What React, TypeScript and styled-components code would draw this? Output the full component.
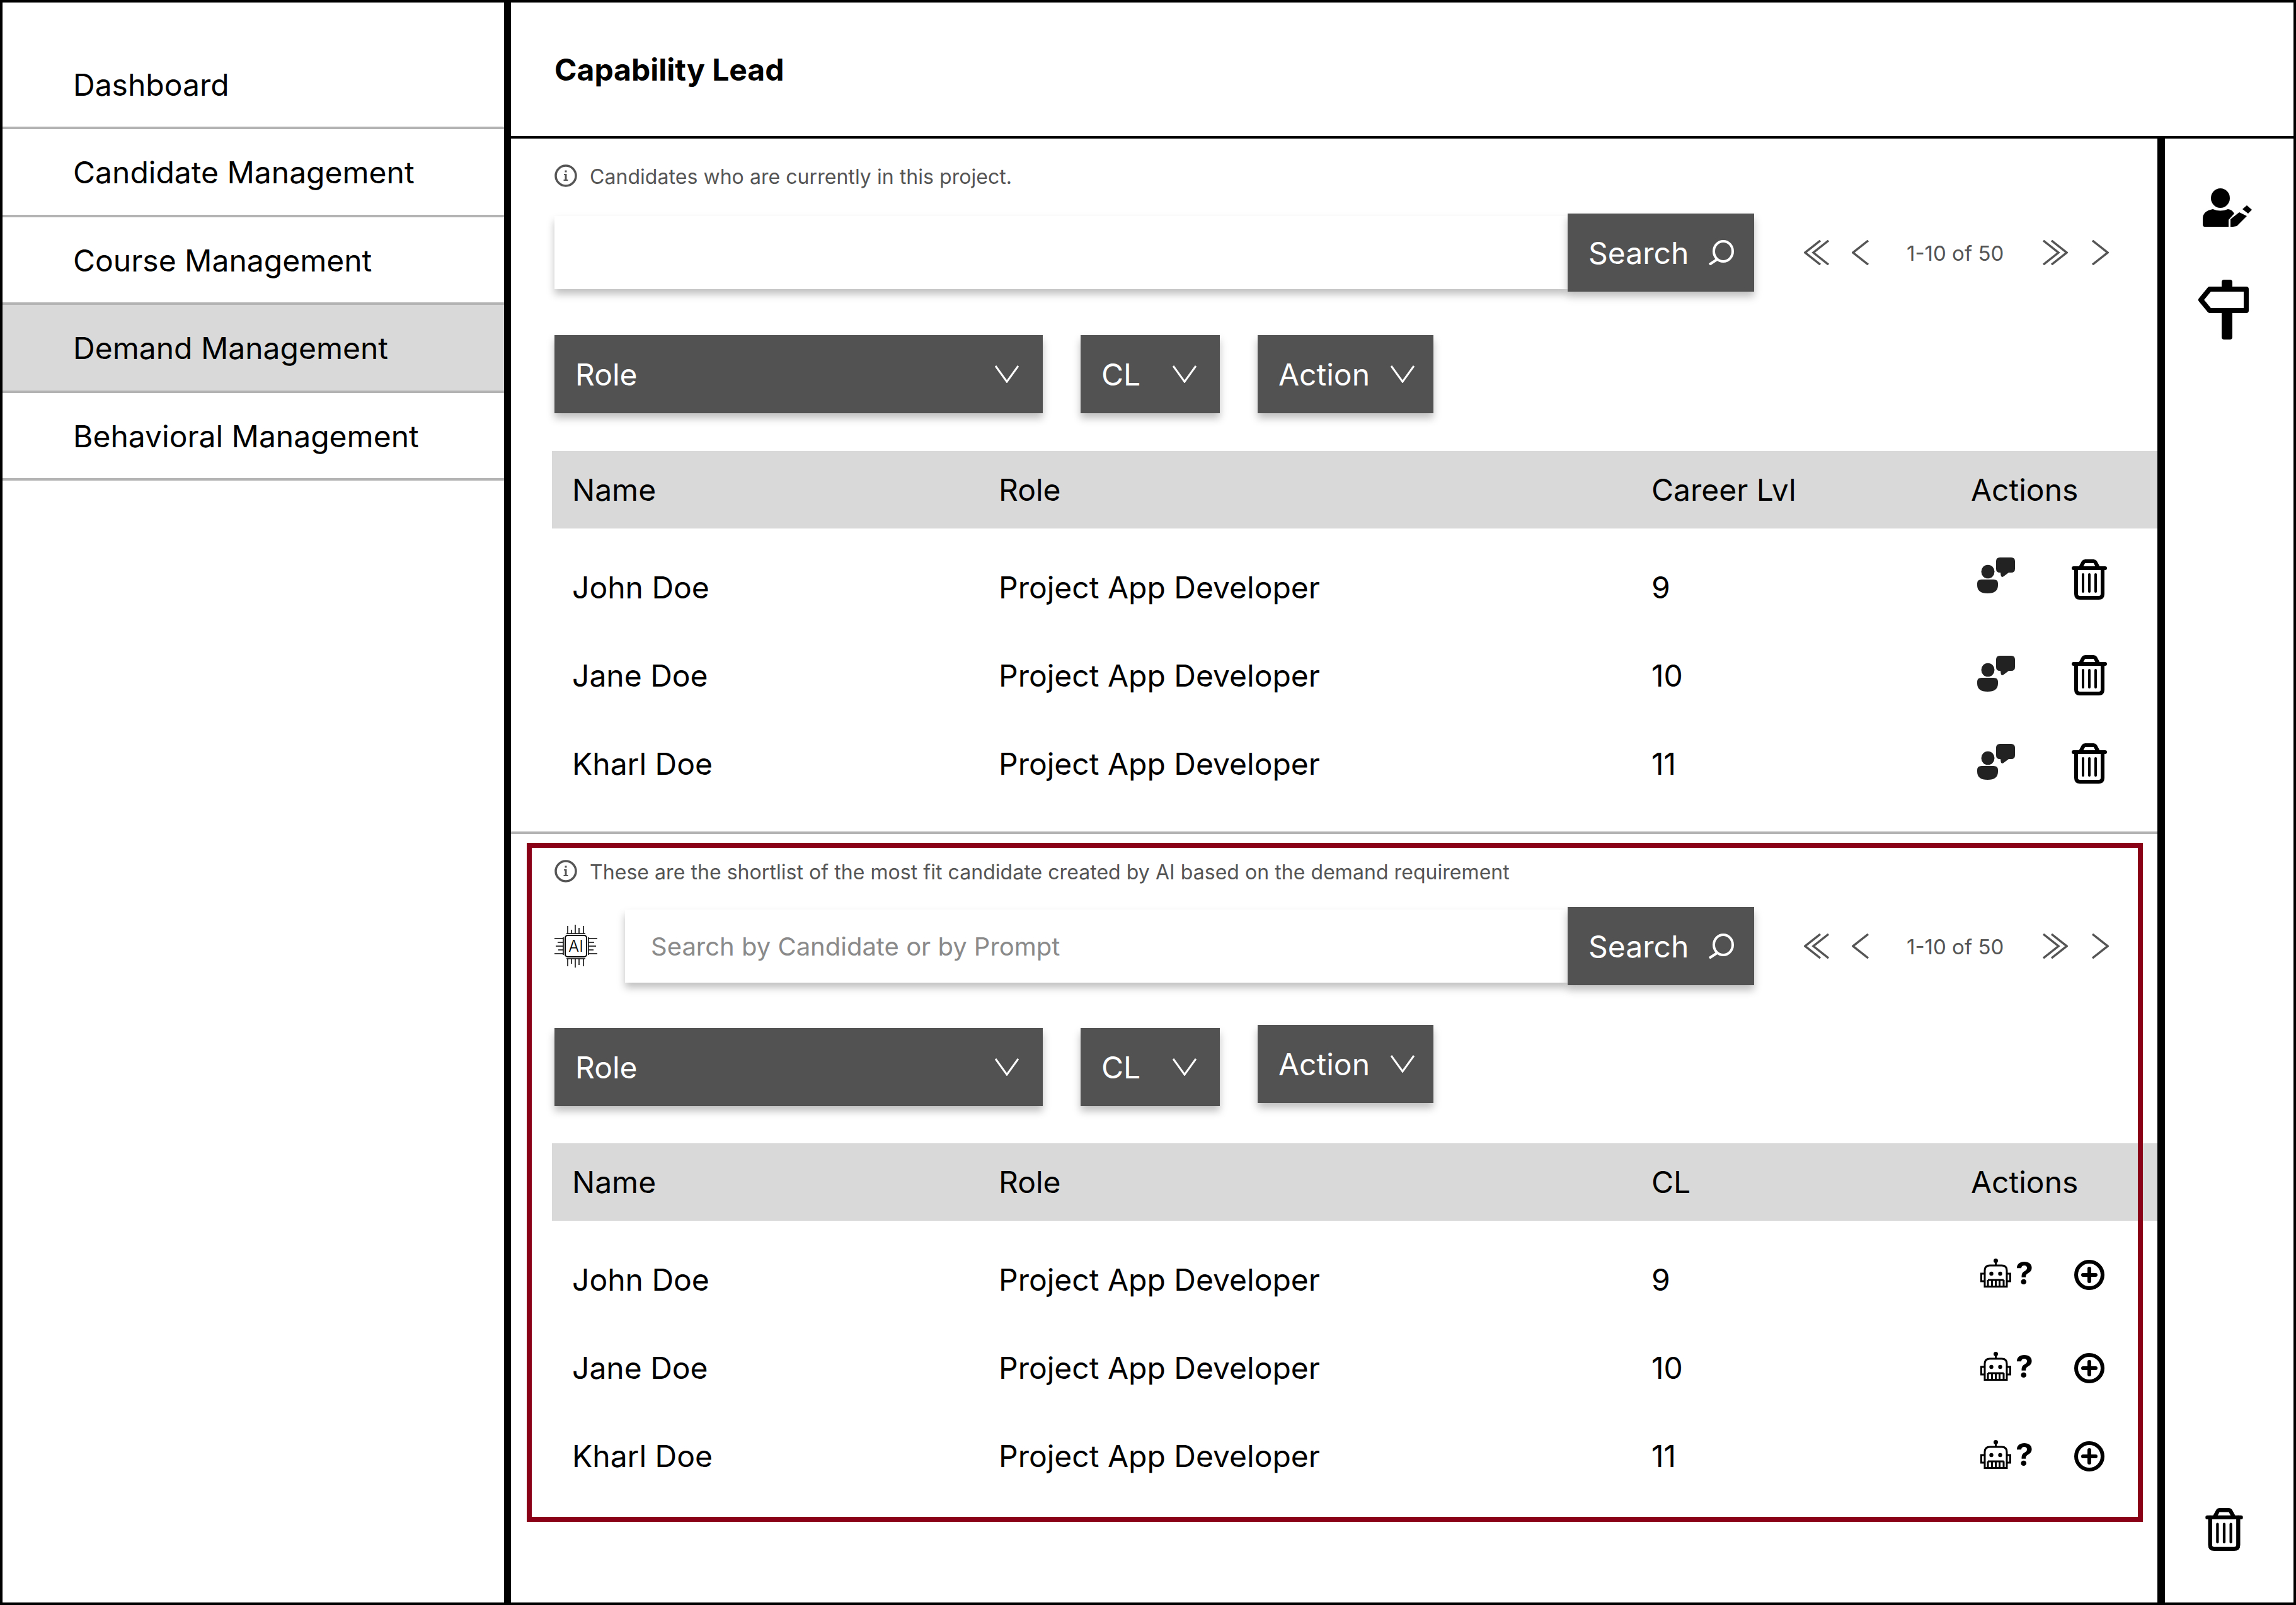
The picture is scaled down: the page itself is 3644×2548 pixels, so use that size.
import React from 'react';

import styled, { createGlobalStyle } from 'styled-components';

const GlobalStyle = createGlobalStyle`
  html, body {
    margin: 0;
    padding: 0;
    background: #fff;
  }
  * {
    box-sizing: border-box;
  }
  body {
    font-family: Inter, "Liberation Sans", sans-serif;
    color: #000;
  }
`;

const Frame = styled.div`
  width: 3644px;
  height: 2548px;
  border: 4px solid #000;
  display: flex;
  overflow: hidden;
`;

const Sidebar = styled.nav`
  width: 807px;
  flex-shrink: 0;
  border-right: 11px solid #000;
`;

const NavItem = styled.div<{ $active?: boolean; $first?: boolean }>`
  height: ${({ $first }) => ($first ? '201px' : '139.5px')};
  padding: ${({ $first }) => ($first ? '64px' : '2px')} 0 0 112px;
  display: flex;
  align-items: center;
  font-size: 48px;
  background: ${({ $active }) => ($active ? '#d9d9d9' : '#fff')};
  border-bottom: 4px solid #b3b3b3;
`;

const Main = styled.div`
  flex: 1;
  min-width: 0;
  display: flex;
  flex-direction: column;
`;

const Header = styled.header`
  height: 216px;
  flex-shrink: 0;
  border-bottom: 4px solid #000;
  padding: 0 0 0 69px;
  display: flex;
  align-items: center;
  font-size: 48px;
  font-weight: 700;
`;

const Body = styled.div`
  flex: 1;
  min-height: 0;
  display: flex;
`;

const Content = styled.div`
  flex: 1;
  min-width: 0;
`;

const Rail = styled.aside`
  width: 216px;
  flex-shrink: 0;
  border-left: 12px solid #000;
  padding: 79px 0 82px 51px;
  display: flex;
  flex-direction: column;
  align-items: flex-start;
`;

const RailSlot = styled.div<{ $indent?: number; $gap?: number; $push?: boolean }>`
  padding-left: ${({ $indent }) => $indent ?? 0}px;
  margin-top: ${({ $push, $gap }) => ($push ? 'auto' : `${$gap ?? 0}px`)};
`;

const Section = styled.section<{ $top: number; $bordered?: boolean }>`
  position: relative;
  padding: ${({ $top }) => $top}px 0 0 69px;
  border-bottom: ${({ $bordered }) => ($bordered ? '4px solid #b3b3b3' : 'none')};
`;

const Highlight = styled.div`
  position: absolute;
  left: 25px;
  top: 14px;
  width: 2565px;
  height: 1078px;
  border: 8px solid #8a0016;
  pointer-events: none;
`;

const Note = styled.div`
  height: 40px;
  display: flex;
  align-items: center;
  gap: 20px;
  font-size: 32px;
  color: #555;
`;

const NoteText = styled.span`
  padding-top: 2px;
  letter-spacing: 0.05px;
`;

const SearchRow = styled.div<{ $top: number }>`
  margin-top: ${({ $top }) => $top}px;
  display: flex;
  align-items: center;
`;

const ChipSlot = styled.div`
  width: 112px;
  flex-shrink: 0;
  display: flex;
  align-items: center;
`;

const SearchInput = styled.div`
  flex: 1;
  width: 0;
  height: 116px;
  padding-left: 41px;
  display: flex;
  align-items: center;
  background: #fff;
  box-shadow: 0 8px 12px rgba(0, 0, 0, 0.25);
  font-size: 40px;
  color: #8a8a8a;
`;

const SearchField = styled.div`
  width: 1608px;
  display: flex;
  align-items: center;
`;

const SearchButton = styled.div`
  width: 296px;
  height: 124px;
  flex-shrink: 0;
  position: relative;
  display: flex;
  align-items: center;
  justify-content: space-between;
  padding: 0 32px 0 33px;
  background: #525252;
  color: #fff;
  font-size: 48px;
  box-shadow: 0 8px 12px rgba(0, 0, 0, 0.25);
`;

const Pager = styled.div`
  margin-left: 79px;
  display: flex;
  align-items: center;
`;

const PagerSpacer = styled.span<{ $width: number }>`
  width: ${({ $width }) => $width}px;
`;

const PagerText = styled.span`
  font-size: 33px;
  color: #555;
  width: 153px;
  margin: 2px 62px 0 59px;
  white-space: nowrap;
`;

const FilterRow = styled.div<{ $top: number }>`
  margin-top: ${({ $top }) => $top}px;
  display: flex;
  align-items: flex-start;
  gap: 60px;
`;

const Dropdown = styled.div<{ $width: number; $right: number; $raised?: boolean }>`
  width: ${({ $width }) => $width}px;
  height: 124px;
  margin-top: ${({ $raised }) => ($raised ? '-5px' : '0')};
  padding: 0 ${({ $right }) => $right}px 0 33px;
  display: flex;
  align-items: center;
  justify-content: space-between;
  background: #525252;
  color: #fff;
  font-size: 48px;
  box-shadow: 0 8px 12px rgba(0, 0, 0, 0.25);
`;

const Table = styled.div<{ $top: number }>`
  margin-top: ${({ $top }) => $top}px;
  margin-left: -4px;
`;

const HeaderRow = styled.div`
  height: 123px;
  padding-left: 32px;
  display: grid;
  grid-template-columns: 677px 1036px 507px 1fr;
  align-items: center;
  background: #d9d9d9;
  font-size: 48px;
`;

const RowList = styled.div<{ $bottom: number }>`
  padding: 25px 0 ${({ $bottom }) => $bottom}px;
`;

const Row = styled.div`
  height: 140px;
  padding: 0 0 3px 32px;
  display: grid;
  grid-template-columns: 677px 1036px 507px 1fr;
  align-items: center;
  font-size: 48px;
`;

const RowActions = styled.div`
  display: grid;
  grid-template-columns: 160px auto;
  align-items: center;
`;

const IconCell = styled.div<{ $lift: number; $indent: number }>`
  display: flex;
  align-items: center;
  gap: 7px;
  padding-left: ${({ $indent }) => $indent}px;
  padding-bottom: ${({ $lift }) => $lift * 2}px;
`;

const Question = styled.span`
  font-size: 50px;
  font-weight: 700;
  line-height: 46px;
`;

const Svg = styled.svg`
  display: block;
  flex-shrink: 0;
`;

const ChevronDown = () => (
  <Svg width="38" height="28" viewBox="0 0 38 28" fill="none" stroke="#fff" strokeWidth="3">
    <path d="M1 1 L19 26 L37 1" />
  </Svg>
);

const SearchIcon = () => (
  <Svg width="42" height="40" viewBox="0 0 42 40" fill="none" stroke="#fff" strokeWidth="4">
    <ellipse cx="25" cy="18" rx="15" ry="16" />
    <path d="M15 31 L3 39" />
  </Svg>
);

const PagerChevron = ({ dir, double }: { dir: 'left' | 'right'; double?: boolean }) => (
  <Svg
    width={double ? 41 : 28}
    height="40"
    viewBox={double ? '0 0 41 40' : '0 0 28 40'}
    fill="none"
    stroke="#555"
    strokeWidth="3.5"
    transform={dir === 'right' ? 'scale(-1 1)' : undefined}
  >
    <path d="M26 1 L2 20 L26 39" />
    {double && <path d="M39 1 L15 20 L39 39" />}
  </Svg>
);

const InfoIcon = () => (
  <Svg width="36" height="36" viewBox="0 0 36 36" fill="#555">
    <circle cx="18" cy="18" r="16" fill="none" stroke="#555" strokeWidth="3.5" />
    <path d="M15 15 H19.5 V24 H21.5 V26 H14.5 V24 H16.5 V17 H15 Z" />
    <rect x="16.5" y="9.5" width="3" height="3" />
  </Svg>
);

const TrashIcon = ({ width = 56, height = 64 }: { width?: number; height?: number }) => (
  <Svg width={width} height={height} viewBox="0 0 56 64" fill="none" stroke="#000" strokeLinecap="round">
    <path d="M3 14 H53" strokeWidth="6" />
    <path d="M14 13 L18.5 4.5 Q19.5 3 21.5 3 H34.5 Q36.5 3 37.5 4.5 L42 13" strokeWidth="6" />
    <path d="M7 14 V55 Q7 61 13 61 H43 Q49 61 49 55 V14" strokeWidth="6" />
    <path d="M18 24 V51 M28 24 V51 M38 24 V51" strokeWidth="4" />
  </Svg>
);

const ChatPersonIcon = () => (
  <Svg width="60" height="57" viewBox="0 0 60 57" fill="#222">
    <ellipse cx="17" cy="22.5" rx="10.5" ry="10.8" />
    <path d="M7 35 H26 Q33 35 33 41 V44 Q33 57 16.5 57 Q0 57 0 44 V41 Q0 35 7 35 Z" />
    <path d="M36 0 H54 Q60 0 60 6 V18 Q60 24 54 24 H50 L42 30 Q38 32.5 37.5 28 L37 24 H36 Q30 24 30 18 V6 Q30 0 36 0 Z" />
  </Svg>
);

const RobotIcon = () => (
  <Svg width="49" height="46" viewBox="0 0 49 46" fill="none" stroke="#000" strokeWidth="3">
    <circle cx="24.5" cy="3.5" r="3.5" fill="#000" stroke="none" />
    <path d="M24.5 5 V11" />
    <path d="M7 44.5 V19 Q7 11 15 11 H34 Q42 11 42 19 V44.5 Z" />
    <path d="M7 24 H1.5 V36 H7 M42 24 H47.5 V36 H42" />
    <circle cx="17.5" cy="24" r="3.2" fill="#000" stroke="none" />
    <circle cx="31.5" cy="24" r="3.2" fill="#000" stroke="none" />
    <path d="M12 34 H37 M12 34 V44 M18.5 34 V44 M24.5 34 V44 M30.5 34 V44 M37 34 V44" />
  </Svg>
);

const PlusCircleIcon = () => (
  <Svg width="48" height="48" viewBox="0 0 48 48" fill="none" stroke="#000" strokeLinecap="round">
    <circle cx="24" cy="24" r="21" strokeWidth="6" />
    <path d="M24 14 V34 M14 24 H34" strokeWidth="6" />
  </Svg>
);

const ChipIcon = () => (
  <Svg width="68" height="68" viewBox="0 0 68 68" fill="none" stroke="#000" strokeWidth="1.5">
    <rect x="17" y="17" width="34" height="34" rx="4" strokeWidth="2" />
    <path d="M21 2 V14 M27 8 V14 M33 0 V14 M39 5 V14 M46 2 V14 M19 14 H49" />
    <path d="M21 54 V66 M27 54 V62 M33 54 V68 M39 54 V64 M46 54 V66 M19 54 H49" />
    <path d="M0 22 H14 M5 28 H14 M2 34 H14 M6 40 H14 M0 46 H14 M14 20 V48" />
    <path d="M54 22 H68 M54 28 H63 M54 34 H66 M54 40 H62 M54 46 H68 M54 20 V48" />
    <text
      x="34"
      y="43"
      textAnchor="middle"
      fontFamily="Inter, sans-serif"
      fontSize="25"
      fontWeight="300"
      fill="#000"
      stroke="none"
    >
      AI
    </text>
  </Svg>
);

const PersonEditIcon = () => (
  <Svg width="78" height="61" viewBox="0 0 78 61" fill="#000">
    <ellipse cx="28" cy="15.5" rx="15" ry="15.5" />
    <path d="M16 33 Q28 38 40 33 Q47 34 50 40 L41 50 V61 H3 Q0 61 0 57 V48 Q0 36 16 33 Z" />
    <path d="M44 61 V49 L58 38 L70 44 L54 60 L48 61 Z" />
    <path d="M63 33 L70 27 L78 34 L72 40 Z" />
  </Svg>
);

const SignpostIcon = () => (
  <Svg width="84" height="95" viewBox="0 0 84 95">
    <rect x="39" y="0" width="17" height="14" rx="4" fill="#000" />
    <rect x="39" y="50" width="17" height="45" rx="4" fill="#000" />
    <path d="M20 15 H78 V49 H20 L6 32 Z" fill="#fff" stroke="#000" strokeWidth="8" strokeLinejoin="round" />
  </Svg>
);

const PagerControls = () => (
  <Pager>
    <PagerChevron dir="left" double />
    <PagerSpacer $width={35} />
    <PagerChevron dir="left" />
    <PagerText>1-10 of 50</PagerText>
    <PagerChevron dir="right" double />
    <PagerSpacer $width={37} />
    <PagerChevron dir="right" />
  </Pager>
);

const Filters = ({ top, raised }: { top: number; raised?: boolean }) => (
  <FilterRow $top={top}>
    <Dropdown $width={775} $right={38}>
      Role
      <ChevronDown />
    </Dropdown>
    <Dropdown $width={221} $right={37}>
      CL
      <ChevronDown />
    </Dropdown>
    <Dropdown $width={279} $right={30} $raised={raised}>
      Action
      <ChevronDown />
    </Dropdown>
  </FilterRow>
);

const PEOPLE = [
  { name: 'John Doe', level: '9', chat: 19, trash: 13, bot: 11, plus: 8 },
  { name: 'Jane Doe', level: '10', chat: 3, trash: 1, bot: 3, plus: 0 },
  { name: 'Kharl Doe', level: '11', chat: 3, trash: 1, bot: 3, plus: 0 },
];

const App = () => (
  <Frame>
    <GlobalStyle />
    <Sidebar>
      <NavItem $first>Dashboard</NavItem>
      <NavItem>Candidate Management</NavItem>
      <NavItem>Course Management</NavItem>
      <NavItem $active>Demand Management</NavItem>
      <NavItem>Behavioral Management</NavItem>
    </Sidebar>
    <Main>
      <Header>Capability Lead</Header>
      <Body>
        <Content>
          <Section $top={39} $bordered>
            <Note>
              <InfoIcon />
              <NoteText>Candidates who are currently in this project.</NoteText>
            </Note>
            <SearchRow $top={40}>
              <SearchField>
                <SearchInput />
              </SearchField>
              <SearchButton>
                Search
                <SearchIcon />
              </SearchButton>
              <PagerControls />
            </SearchRow>
            <Filters top={69} />
            <Table $top={60}>
              <HeaderRow>
                <span>Name</span>
                <span>Role</span>
                <span>Career Lvl</span>
                <span>Actions</span>
              </HeaderRow>
              <RowList $bottom={36}>
                {PEOPLE.map((person) => (
                  <Row key={person.name}>
                    <span>{person.name}</span>
                    <span>Project App Developer</span>
                    <span>{person.level}</span>
                    <RowActions>
                      <IconCell $lift={person.chat} $indent={10}>
                        <ChatPersonIcon />
                      </IconCell>
                      <IconCell $lift={person.trash} $indent={0}>
                        <TrashIcon />
                      </IconCell>
                    </RowActions>
                  </Row>
                ))}
              </RowList>
            </Table>
          </Section>
          <Section $top={39}>
            <Highlight />
            <Note>
              <InfoIcon />
              <NoteText>
                These are the shortlist of the most fit candidate created by AI based on the demand requirement
              </NoteText>
            </Note>
            <SearchRow $top={37}>
              <SearchField>
                <ChipSlot>
                  <ChipIcon />
                </ChipSlot>
                <SearchInput>Search by Candidate or by Prompt</SearchInput>
              </SearchField>
              <SearchButton>
                Search
                <SearchIcon />
              </SearchButton>
              <PagerControls />
            </SearchRow>
            <Filters top={68} raised />
            <Table $top={59}>
              <HeaderRow>
                <span>Name</span>
                <span>Role</span>
                <span>CL</span>
                <span>Actions</span>
              </HeaderRow>
              <RowList $bottom={0}>
                {PEOPLE.map((person) => (
                  <Row key={person.name}>
                    <span>{person.name}</span>
                    <span>Project App Developer</span>
                    <span>{person.level}</span>
                    <RowActions>
                      <IconCell $lift={person.bot} $indent={15}>
                        <RobotIcon />
                        <Question>?</Question>
                      </IconCell>
                      <IconCell $lift={person.plus} $indent={4}>
                        <PlusCircleIcon />
                      </IconCell>
                    </RowActions>
                  </Row>
                ))}
              </RowList>
            </Table>
          </Section>
        </Content>
        <Rail>
          <RailSlot $indent={9}>
            <PersonEditIcon />
          </RailSlot>
          <RailSlot $gap={84}>
            <SignpostIcon />
          </RailSlot>
          <RailSlot $push $indent={13}>
            <TrashIcon width={60} height={68} />
          </RailSlot>
        </Rail>
      </Body>
    </Main>
  </Frame>
);

export default App;
